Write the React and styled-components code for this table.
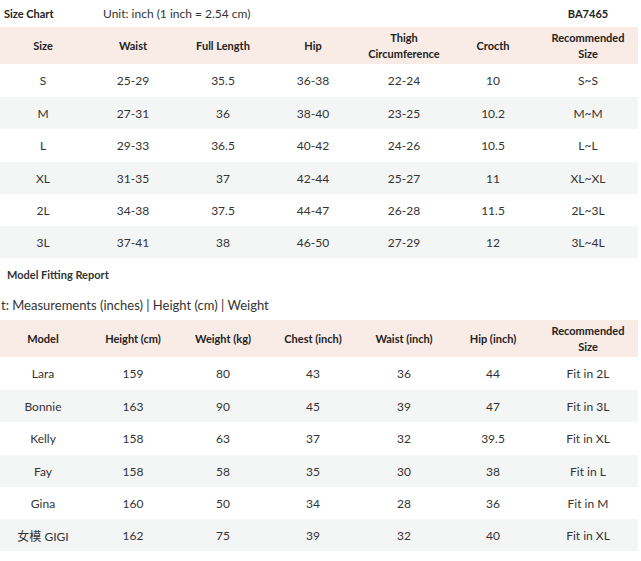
import React from "react";
import styled, { createGlobalStyle } from "styled-components";

const Global = createGlobalStyle`
  html, body { margin: 0; padding: 0; background: #fff; }
  body {
    font-family: Lato, "Noto Sans", "Noto Sans CJK SC", sans-serif;
    font-size: 12px;
    color: #333;
    overflow: hidden;
  }
`;

const COLS = "86px 94px 86px 94px 88px 90px 100px";

const Page = styled.div`
  width: 641px;
  display: flex;
  flex-direction: column;
`;

const TitleBar = styled.div`
  display: grid;
  grid-template-columns: 103px 435px 100px;
  height: 27px;
  align-items: center;
`;

const Title = styled.div`
  font-weight: 700;
  font-size: 11px;
  color: #222;
  padding-left: ${(p) => p.$pad || 0}px;
  text-align: ${(p) => p.$align || "left"};
`;

const Plain = styled.div`
  color: #333;
`;

const Table = styled.div`
  display: grid;
  grid-template-columns: ${COLS};
  width: 638px;
`;

const HeadCell = styled.div`
  background: #f9ebe6;
  height: 37px;
  display: flex;
  align-items: center;
  justify-content: center;
  text-align: center;
  font-weight: 700;
  font-size: 11px;
  color: #222;
  line-height: 16px;
`;

const Cell = styled.div`
  height: ${(p) => p.$h}px;
  background: ${(p) => (p.$alt ? "#f4f5f5" : "#fff")};
  display: flex;
  align-items: center;
  justify-content: center;
  color: #333;
`;

const SectionTitle = styled.div`
  height: 32px;
  display: flex;
  align-items: center;
  padding-left: 7px;
  font-weight: 700;
  font-size: 11px;
  color: #333;
`;

const SubTitle = styled.div`
  height: 30px;
  display: flex;
  align-items: center;
  padding-left: 1px;
  font-size: 13px;
  color: #333;
  white-space: nowrap;
`;

const sizeHead = ["Size", "Waist", "Full Length", "Hip", ["Thigh", "Circumference"], "Crocth", ["Recommended", "Size"]];
const sizeRows = [
  ["S", "25-29", "35.5", "36-38", "22-24", "10", "S~S"],
  ["M", "27-31", "36", "38-40", "23-25", "10.2", "M~M"],
  ["L", "29-33", "36.5", "40-42", "24-26", "10.5", "L~L"],
  ["XL", "31-35", "37", "42-44", "25-27", "11", "XL~XL"],
  ["2L", "34-38", "37.5", "44-47", "26-28", "11.5", "2L~3L"],
  ["3L", "37-41", "38", "46-50", "27-29", "12", "3L~4L"],
];

const modelHead = ["Model", "Height (cm)", "Weight (kg)", "Chest (inch)", "Waist (inch)", "Hip (inch)", ["Recommended", "Size"]];
const modelRows = [
  ["Lara", "159", "80", "43", "36", "44", "Fit in 2L"],
  ["Bonnie", "163", "90", "45", "39", "47", "Fit in 3L"],
  ["Kelly", "158", "63", "37", "32", "39.5", "Fit in XL"],
  ["Fay", "158", "58", "35", "30", "38", "Fit in L"],
  ["Gina", "160", "50", "34", "28", "36", "Fit in M"],
  ["女模 GIGI", "162", "75", "39", "32", "40", "Fit in XL"],
];

const heights = [33, 32, 33, 32, 32, 32];

function DataTable({ head, rows }) {
  return (
    <Table>
      {head.map((h, i) => (
        <HeadCell key={"h" + i}>
          {Array.isArray(h) ? (
            <span>
              {h[0]}
              <br />
              {h[1]}
            </span>
          ) : (
            h
          )}
        </HeadCell>
      ))}
      {rows.map((r, ri) =>
        r.map((c, ci) => (
          <Cell key={ri + "-" + ci} $alt={ri % 2 === 1} $h={heights[ri]}>
            {c}
          </Cell>
        ))
      )}
    </Table>
  );
}

export default function App() {
  return (
    <Page>
      <Global />
      <TitleBar>
        <Title $pad={4}>Size Chart</Title>
        <Plain>Unit: inch (1 inch = 2.54 cm)</Plain>
        <Title $align="center">BA7465</Title>
      </TitleBar>
      <DataTable head={sizeHead} rows={sizeRows} />
      <SectionTitle>Model Fitting Report</SectionTitle>
      <SubTitle>t: Measurements (inches) | Height (cm) | Weight</SubTitle>
      <DataTable head={modelHead} rows={modelRows} />
    </Page>
  );
}
